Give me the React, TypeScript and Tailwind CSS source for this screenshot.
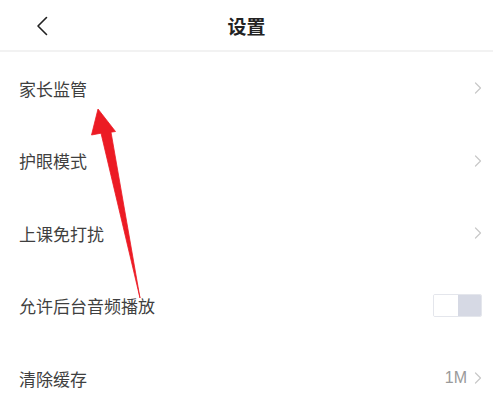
import React from "react";

const Chevron = () => (
  <svg width="8" height="12" viewBox="0 0 8 12" fill="none">
    <path d="M1.5 1 L6.5 6 L1.5 11" stroke="#c8c8c8" strokeWidth="1.2" strokeLinecap="round" strokeLinejoin="round" />
  </svg>
);

const Row = ({ label, right }: { label: string; right: React.ReactNode }) => (
  <div className="flex h-[72.5px] items-center justify-between pl-[19px] pr-[11px]">
    <span className="text-[17px] font-normal leading-none text-[#3f3f3f]">{label}</span>
    {right}
  </div>
);

export default function App() {
  return (
    <div
      className="relative h-[402px] w-[493px] overflow-hidden bg-white"
      style={{ fontFamily: '"Noto Sans CJK SC", "Noto Sans", sans-serif' }}
    >
      <div className="relative flex h-[50px] items-center justify-center">
        <svg className="absolute left-[36px] top-[16px]" width="13" height="20" viewBox="0 0 13 20" fill="none">
          <path d="M10.5 1.5 L2 10 L10.5 18.5" stroke="#222" strokeWidth="1.6" strokeLinecap="round" strokeLinejoin="round" />
        </svg>
        <span className="text-[19px] font-bold leading-none text-[#222222]">设置</span>
      </div>
      <div className="h-[2px] bg-[#f2f2f2]" />
      <Row label="家长监管" right={<Chevron />} />
      <Row label="护眼模式" right={<Chevron />} />
      <Row label="上课免打扰" right={<Chevron />} />
      <Row
        label="允许后台音频播放"
        right={
          <div className="flex h-[23px] w-[49px] overflow-hidden rounded-[2px] border border-[#e4e6ec]">
            <div className="w-1/2 bg-white" />
            <div className="w-1/2 bg-[#d6d9e4]" />
          </div>
        }
      />
      <Row
        label="清除缓存"
        right={
          <div className="flex items-center gap-[7px]">
            <span className="text-[16px] leading-none text-[#9a9a9a]" style={{ fontFamily: '"Liberation Sans", sans-serif' }}>1M</span>
            <Chevron />
          </div>
        }
      />
      <svg className="absolute left-0 top-0" width="493" height="402" viewBox="0 0 493 402">
        <polygon
          points="98,109 91.5,135 101,133.2 140,298 111,132.2 115.5,131.5"
          fill="#ec1b24"
          stroke="#ec1b24"
          strokeWidth="0.8"
          strokeLinejoin="round"
        />
      </svg>
    </div>
  );
}
